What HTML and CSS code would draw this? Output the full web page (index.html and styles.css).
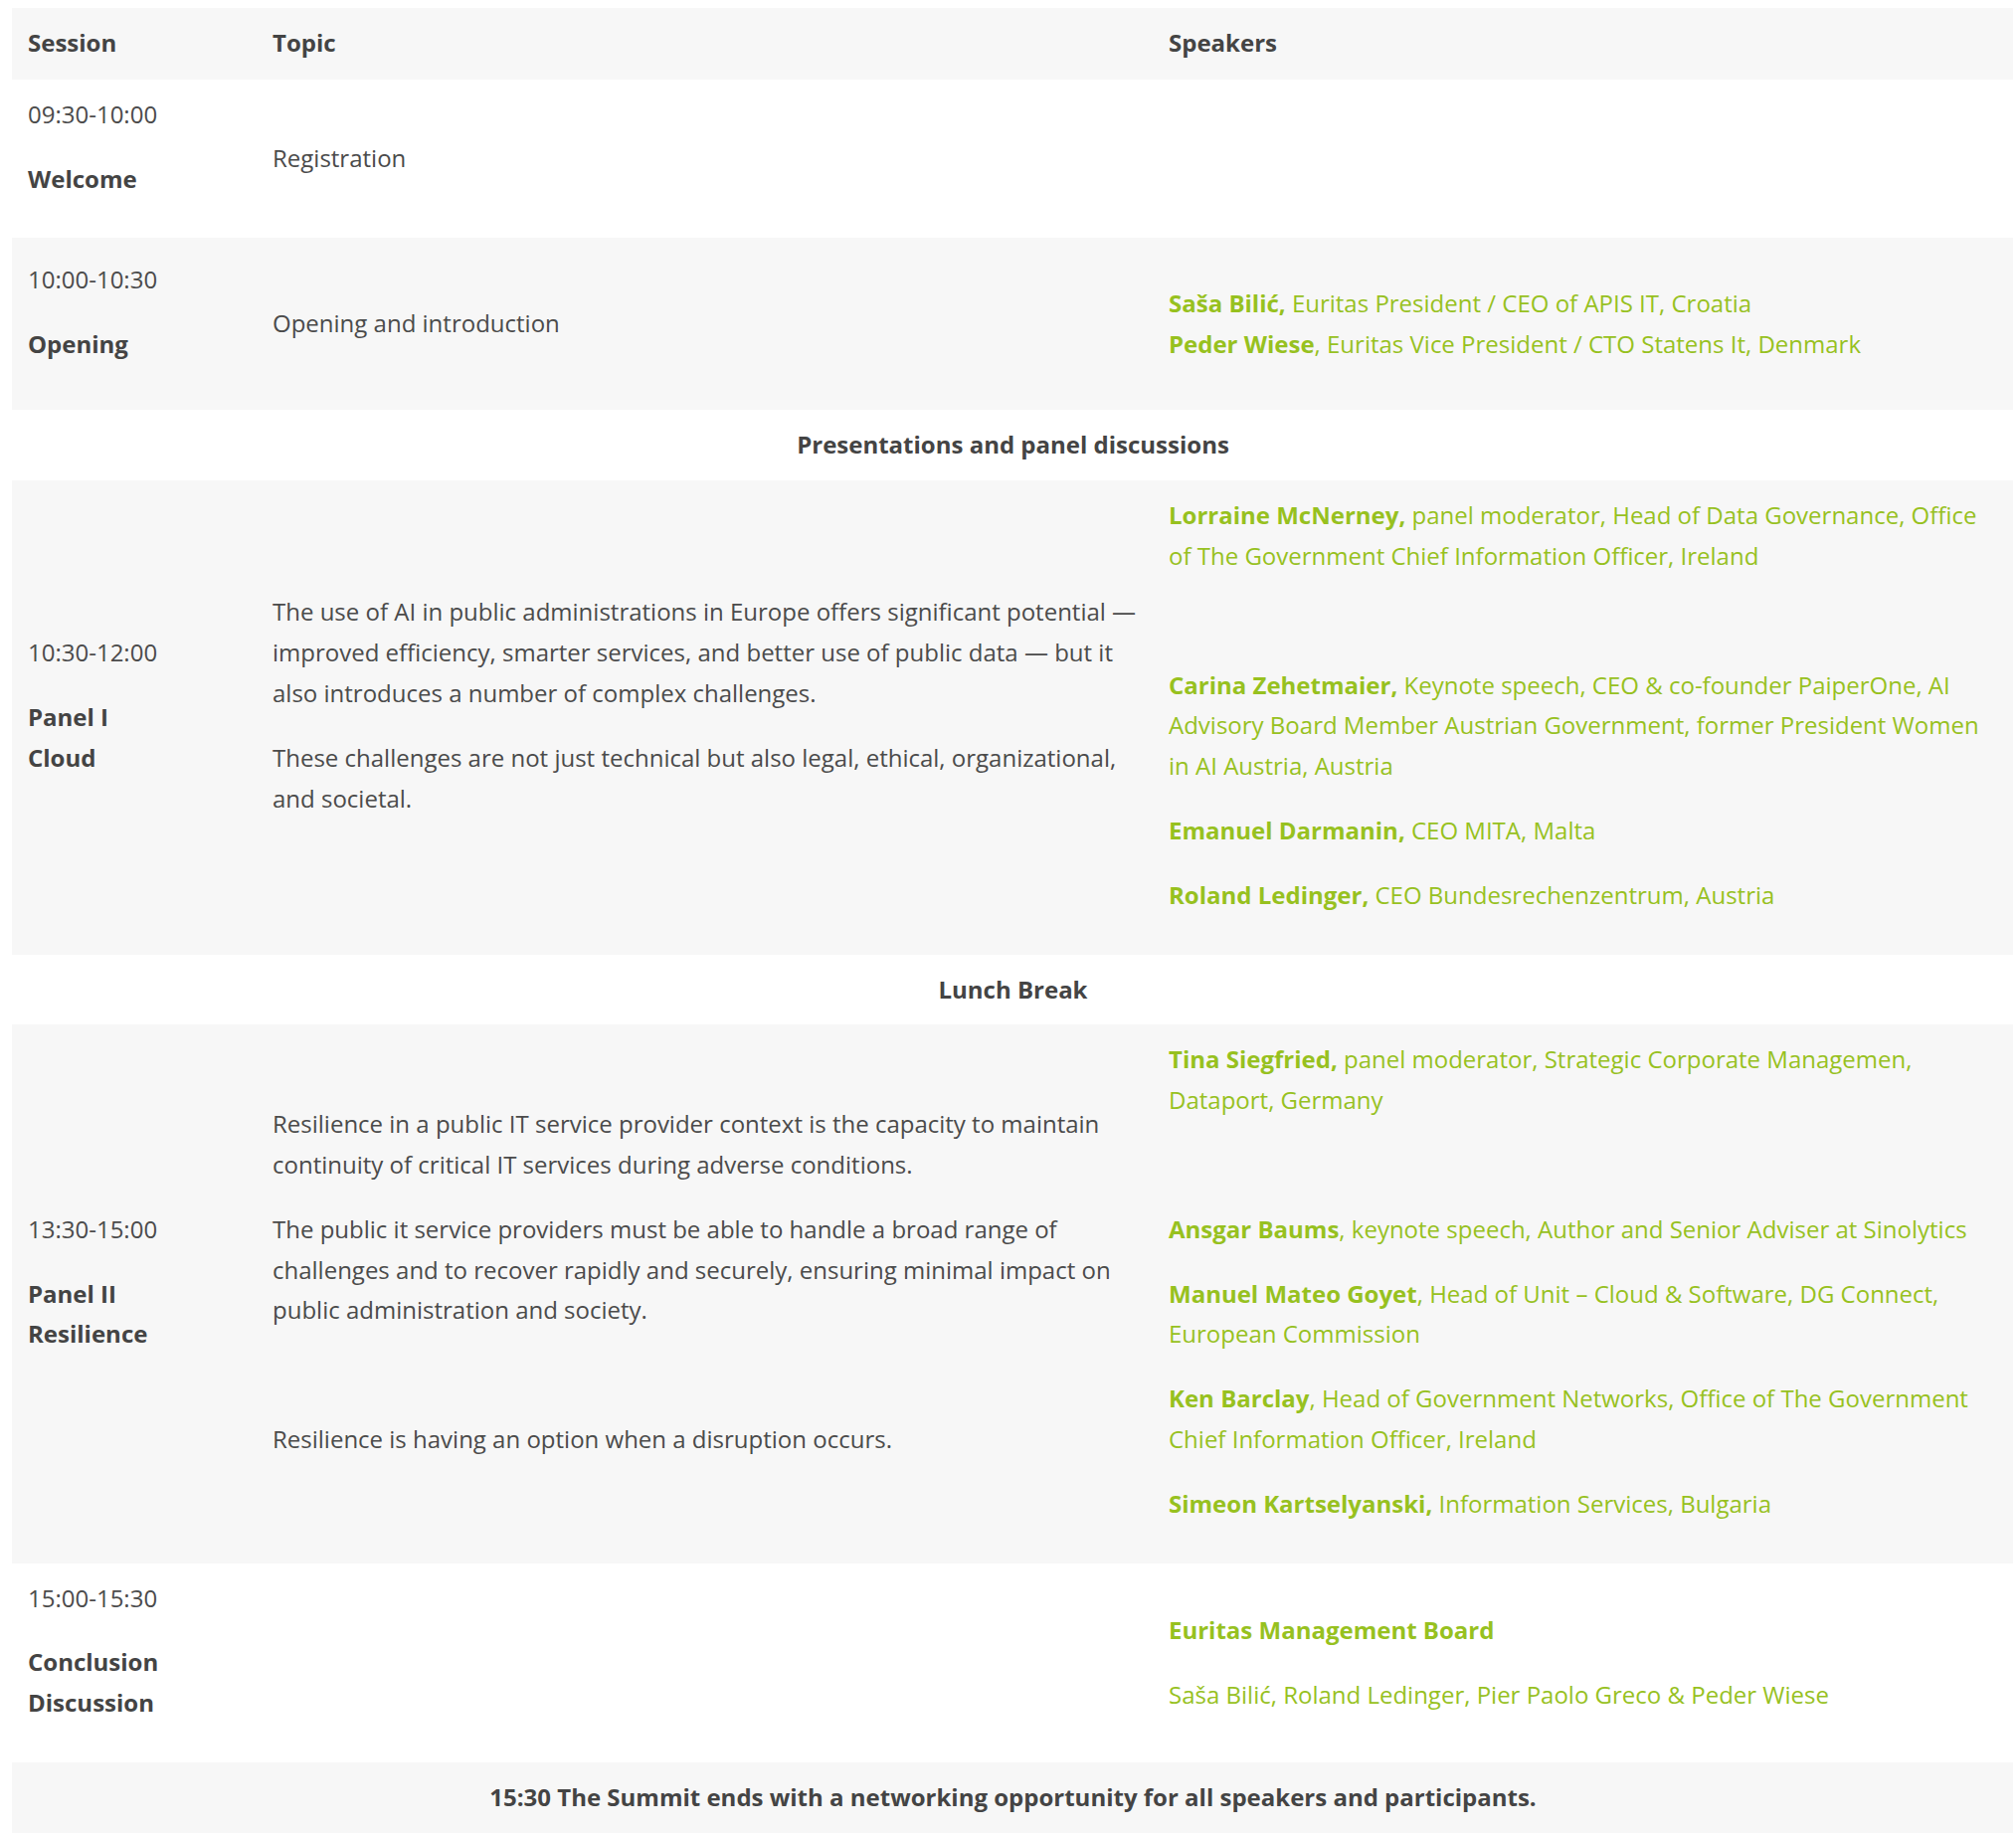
FILE: index.html
```html
<!DOCTYPE html>
<html lang="en">
<head>
<meta charset="utf-8">
<title>Agenda</title>
<link rel="stylesheet" href="styles.css">
</head>
<body>
<table class="agenda">
  <colgroup>
    <col class="c-session">
    <col class="c-topic">
    <col class="c-speakers">
  </colgroup>
  <thead>
    <tr class="shade">
      <th>Session</th>
      <th>Topic</th>
      <th>Speakers</th>
    </tr>
  </thead>
  <tbody>
    <tr>
      <td><p>09:30-10:00</p><p><strong>Welcome</strong></p></td>
      <td>Registration</td>
      <td></td>
    </tr>
    <tr class="shade r-opening">
      <td><p>10:00-10:30</p><p><strong>Opening</strong></p></td>
      <td>Opening and introduction</td>
      <td class="spk"><p class="flush"><strong>Saša Bilić,</strong> Euritas President / CEO of APIS IT, Croatia<br><strong>Peder Wiese</strong>, Euritas Vice President / CTO Statens It, Denmark</p></td>
    </tr>
    <tr>
      <td class="band" colspan="3"><strong>Presentations and panel discussions</strong></td>
    </tr>
    <tr class="shade">
      <td><p>10:30-12:00</p><p><strong>Panel I<br>Cloud</strong></p></td>
      <td>
        <p>The use of AI in public administrations in Europe offers significant potential — improved efficiency, smarter services, and better use of public data — but it also introduces a number of complex challenges.</p>
        <p>These challenges are not just technical but also legal, ethical, organizational, and societal.</p>
      </td>
      <td class="spk">
        <p><strong>Lorraine McNerney,</strong> panel moderator, Head of Data Governance, Office of The Government Chief Information Officer, Ireland</p>
        <p>&nbsp;</p>
        <p><strong>Carina Zehetmaier,</strong> Keynote speech, CEO &amp; co-founder PaiperOne, AI Advisory Board Member Austrian Government, former President Women in AI Austria, Austria</p>
        <p><strong>Emanuel Darmanin,</strong> CEO MITA, Malta</p>
        <p><strong>Roland Ledinger,</strong> CEO Bundesrechenzentrum, Austria</p>
      </td>
    </tr>
    <tr>
      <td class="band" colspan="3"><strong>Lunch Break</strong></td>
    </tr>
    <tr class="shade">
      <td><p>13:30-15:00</p><p><strong>Panel II<br>Resilience</strong></p></td>
      <td>
        <p>Resilience in a public IT service provider context is the capacity to maintain continuity of critical IT services during adverse conditions.</p>
        <p>The public it service providers must be able to handle a broad range of challenges and to recover rapidly and securely, ensuring minimal impact on public administration and society.</p>
        <p>&nbsp;</p>
        <p>Resilience is having an option when a disruption occurs.</p>
      </td>
      <td class="spk">
        <p><strong>Tina Siegfried,</strong> panel moderator, Strategic Corporate Managemen, Dataport, Germany</p>
        <p>&nbsp;</p>
        <p><strong>Ansgar Baums</strong>, keynote speech, Author and Senior Adviser at Sinolytics</p>
        <p><strong>Manuel Mateo Goyet</strong>, Head of Unit – Cloud &amp; Software, DG Connect, European Commission</p>
        <p><strong>Ken Barclay</strong>, Head of Government Networks, Office of The Government Chief Information Officer, Ireland</p>
        <p><strong>Simeon Kartselyanski,</strong> Information Services, Bulgaria</p>
      </td>
    </tr>
    <tr>
      <td><p>15:00-15:30</p><p><strong>Conclusion<br>Discussion</strong></p></td>
      <td></td>
      <td class="spk"><p><strong>Euritas Management Board</strong></p><p class="flush">Saša Bilić, Roland Ledinger, Pier Paolo Greco &amp; Peder Wiese</p></td>
    </tr>
    <tr class="shade">
      <td class="band" colspan="3"><strong>15:30 The Summit ends with a networking opportunity for all speakers and participants.</strong></td>
    </tr>
  </tbody>
</table>
</body>
</html>
```

FILE: styles.css
```css
html, body {
  margin: 0;
  padding: 0;
  background: #ffffff;
}

body {
  padding: 8px 3px 3px 12px;
  font-family: "Open Sans", "Noto Sans", "DejaVu Sans", sans-serif;
  font-size: 24px;
  line-height: 1.7;
  color: #4b4b4b;
}

.agenda {
  width: 2012px;
  table-layout: fixed;
  border-collapse: collapse;
  border-spacing: 0;
}

.c-session { width: 246px; }
.c-topic { width: 901px; }
.c-speakers { width: 865px; }

.agenda th,
.agenda td {
  padding: 15px 15px 15px 16px;
  text-align: left;
  vertical-align: middle;
}

.agenda th {
  padding-bottom: 16px;
  font-weight: 700;
  color: #444444;
}

.agenda strong {
  font-weight: 700;
  color: #444444;
}

.agenda p {
  margin: 0 0 24px 0;
}

.agenda p.flush {
  margin-bottom: 0;
}

.shade {
  background: #f7f7f7;
}

.r-opening {
  height: 173px;
}

.band {
  text-align: center !important;
}

.spk,
.spk strong {
  color: #97c11f;
}
```
